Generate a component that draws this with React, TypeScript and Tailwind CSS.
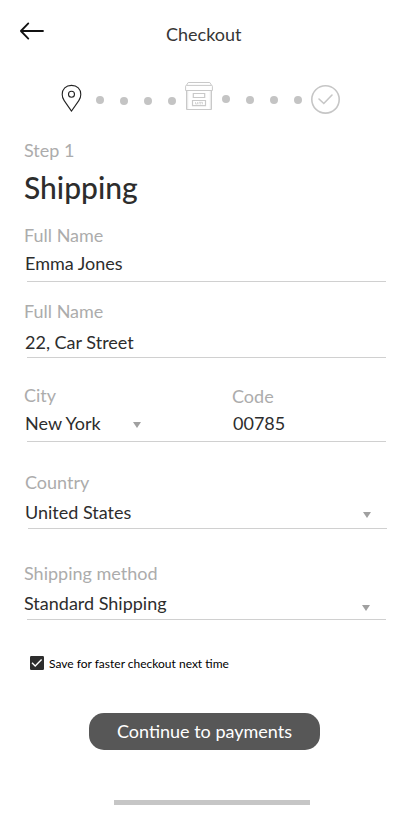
import type { ReactNode } from "react";

function Label({ children, className = "" }: { children: ReactNode; className?: string }) {
  return <div className={`h-[22px] whitespace-nowrap text-[#acacac] ${className}`}>{children}</div>;
}

function Value({ children, className = "" }: { children: ReactNode; className?: string }) {
  return <div className={`h-[22px] whitespace-nowrap text-[#2d2d2d] ${className}`}>{children}</div>;
}

function Caret({ className = "" }: { className?: string }) {
  return (
    <svg className={`shrink-0 ${className}`} width="8" height="6" viewBox="0 0 8 6">
      <path d="M0 0h8L4 6z" fill="#a0a0a0" />
    </svg>
  );
}

function Rule({ className = "" }: { className?: string }) {
  return <div className={`h-px w-[359px] bg-[#d0d0d0] ${className}`} />;
}

function Dot({ className = "" }: { className?: string }) {
  return <span className={`size-2 shrink-0 rounded-full bg-[#c4c4c4] ${className}`} />;
}

export default function App() {
  return (
    <main className="flex h-[823px] w-[411px] flex-col overflow-hidden bg-white font-['Lato',sans-serif] text-[18px] leading-[22px]">
      <header className="flex h-[80px] shrink-0 items-start">
        <svg className="ml-[19px] mt-[21px]" width="26" height="20" viewBox="0 0 26 20" fill="none" stroke="#111" strokeWidth="1.8" strokeLinecap="round" strokeLinejoin="round">
          <path d="M24 10H1.9M9.3 2.4L1.9 10l7.4 7.6" />
        </svg>
        <h1 className="ml-[121px] mt-[23px] whitespace-nowrap text-[#363636]">Checkout</h1>
      </header>

      <div className="flex h-[59px] shrink-0 items-start">
        <svg className="ml-[61px] mt-[4px] shrink-0" width="21" height="29" viewBox="0 0 21 29" fill="none" stroke="#222" strokeWidth="1.1">
          <path d="M10.5 27.1L3.2 16.6C1.8 14.5 1.2 12.7 1.2 10.4c0-5.4 3.6-9 9.3-9s9.3 3.6 9.3 9c0 2.3-.6 4.1-2 6.2z" />
          <circle cx="10.5" cy="10.3" r="3" />
        </svg>
        <Dot className="ml-[14px] mt-[16px]" />
        <Dot className="ml-[16px] mt-[17px]" />
        <Dot className="ml-[16px] mt-[17px]" />
        <Dot className="ml-[16px] mt-[17px]" />
        <svg className="ml-[9px] mt-[2px] shrink-0" width="28" height="28" viewBox="0 0 28 28" fill="none" stroke="#c9c9c9" strokeWidth="1">
          <path d="M.6 4.2Q.6 3.4 1.4 3.4h25.2q.8 0 .8.8v4.3H.6zM1.4 3.4L3.2.5h21.6l1.8 2.9M1.5 8.5v19h25v-19" />
          <path d="M2.7 9v18M25.3 9v18" stroke="#e4e4e4" />
          <path d="M8.3 11.5h11.4v4H8.3zM7.5 18.5h13v5.2h-13z" strokeWidth="1.2" />
          <path d="M10.5 20v2h2v-2M14 22.3v-2h3.5v2M15.7 20.5v2" strokeWidth=".7" />
        </svg>
        <Dot className="ml-[9px] mt-[15px]" />
        <Dot className="ml-[16px] mt-[16px]" />
        <Dot className="ml-[16px] mt-[16px]" />
        <Dot className="ml-[16px] mt-[16px]" />
        <svg className="ml-[8px] mt-[4px] shrink-0" width="31" height="31" viewBox="0 0 31 31" fill="none" stroke="#c6c6c6" strokeWidth="1.6">
          <circle cx="15.5" cy="15.4" r="13.7" />
          <path d="M9 15l4.8 4.5L22 11" strokeLinecap="round" />
        </svg>
      </div>

      <Label className="ml-[24px]">Step 1</Label>
      <h2 className="ml-[24px] mt-[8px] h-[36px] text-[30px] font-medium leading-[36px] text-[#2d2d2d]">Shipping</h2>

      <section className="mt-[19px]">
        <Label className="ml-[24px]">Full Name</Label>
        <Value className="ml-[25px] mt-[6px]">Emma Jones</Value>
        <Rule className="ml-[27px] mt-[7px]" />
      </section>

      <section className="mt-[18px]">
        <Label className="ml-[24px]">Full Name</Label>
        <Value className="ml-[25px] mt-[9px]">22, Car Street</Value>
        <Rule className="ml-[27px] mt-[4px]" />
      </section>

      <section className="mt-[26px]">
        <div className="flex">
          <div className="w-[232px]">
            <Label className="ml-[24px]">City</Label>
            <div className="ml-[25px] mt-[6px] flex w-[116px] justify-between">
              <Value>New York</Value>
              <Caret className="mt-[10px]" />
            </div>
          </div>
          <div>
            <Label className="mt-px">Code</Label>
            <Value className="ml-px mt-[5px]">00785</Value>
          </div>
        </div>
        <Rule className="ml-[27px] mt-[7px]" />
      </section>

      <section className="mt-[29px]">
        <Label className="ml-[25px]">Country</Label>
        <div className="ml-[25px] mt-[8px] flex w-[346px] justify-between">
          <Value>United States</Value>
          <Caret className="mt-[11px]" />
        </div>
        <Rule className="ml-[28px] mt-[5px]" />
      </section>

      <section className="mt-[33px]">
        <Label className="ml-[24px]">Shipping method</Label>
        <div className="ml-[24px] mt-[8px] flex w-[346px] justify-between">
          <Value>Standard Shipping</Value>
          <Caret className="mt-[13px]" />
        </div>
        <Rule className="ml-[27px] mt-[5px]" />
      </section>

      <label className="ml-[30px] mt-[36px] flex h-[14px] items-center">
        <svg width="14" height="14" viewBox="0 0 14 14">
          <rect width="14" height="14" rx="1.2" fill="#2d2d2d" />
          <path d="M2 6.8l3.2 3.1 6.4-6.3" fill="none" stroke="#fff" strokeWidth="1.4" />
        </svg>
        <span className="ml-[5px] mt-[2px] whitespace-nowrap text-[12px] leading-[14px] text-black">Save for faster checkout next time</span>
      </label>

      <button className="ml-[89px] mt-[43px] h-[37px] w-[231px] shrink-0 rounded-[15px] bg-[#575757] pb-[2px] text-white">Continue to payments</button>
      <div className="ml-[114px] mt-[50px] h-[5px] w-[196px] shrink-0 bg-[#c6c6c6]" />
    </main>
  );
}
